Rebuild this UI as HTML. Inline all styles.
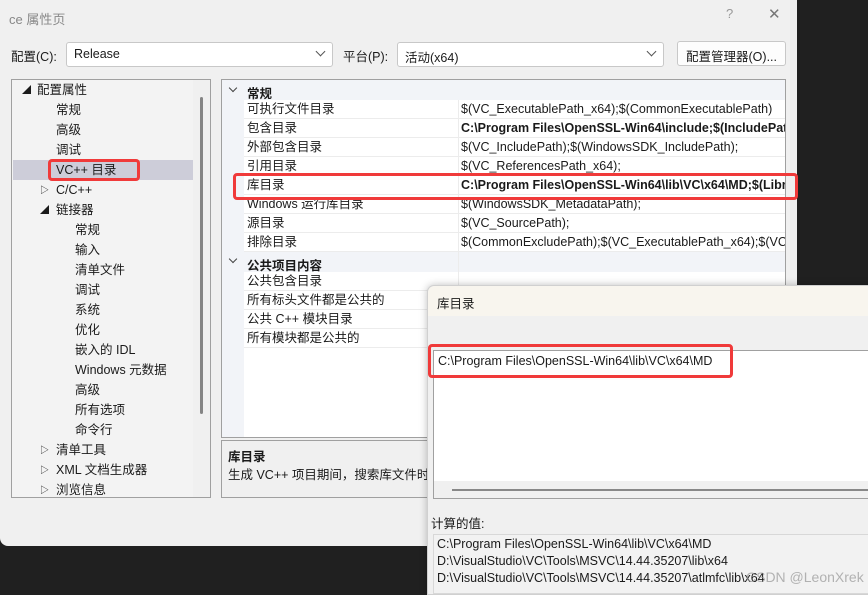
<!DOCTYPE html>
<html><head><meta charset="utf-8"><style>
*{margin:0;padding:0;box-sizing:border-box}
body{width:868px;height:589px;background:#202020;position:relative;overflow:hidden;font-family:"Liberation Sans","Noto Sans CJK SC",sans-serif;font-size:12px;color:#1a1a1a}
.a{position:absolute;white-space:nowrap}
#dlg{position:absolute;left:0;top:0;width:797px;height:546px;background:#f0f0f0;border-radius:0 0 8px 8px}
.combo{position:absolute;height:25px;background:#fff;border:1px solid #c8c8c8;border-radius:3px;padding:4px 7px;font-size:12.5px}
.chev{position:absolute;right:8px;top:5px;width:7px;height:7px;border-right:1px solid #555;border-bottom:1px solid #555;transform:rotate(45deg)}
.gchev{position:absolute;width:6px;height:6px;border-right:1.3px solid #444;border-bottom:1.3px solid #444;transform:rotate(45deg)}
.tree div{position:absolute;height:20px;line-height:20px;font-size:12.5px;white-space:nowrap}
.grid div.r{position:absolute;left:22px;width:542px;height:19px;line-height:19px;background:#fff;border-bottom:1px solid #ececec;font-size:12.5px;padding-left:3px;white-space:nowrap;overflow:hidden}
.r span{position:absolute;left:217px;white-space:nowrap}
.red{position:absolute;border:3px solid #f03a3a;border-radius:4px}
</style></head><body>
<div id="dlg">
<div class="a" style="left:9px;top:9px;font-size:13px;color:#888">ce 属性页</div>
<div class="a" style="left:726px;top:6px;color:#999;font-size:13px">?</div>
<div class="a" style="left:768px;top:5px;color:#777;font-size:15px">✕</div>
<div class="a" style="left:11px;top:46px;font-size:12.5px">配置(C):</div>
<div class="combo" style="left:66px;top:42px;width:267px">Release<div class="chev"></div></div>
<div class="a" style="left:343px;top:46px;font-size:12.5px">平台(P):</div>
<div class="combo" style="left:397px;top:42px;width:267px">活动(x64)<div class="chev"></div></div>
<div class="combo" style="left:677px;top:41px;width:109px;background:#fdfdfd;text-align:center;padding:4px 0">配置管理器(O)...</div>

<div class="tree" style="position:absolute;left:11px;top:79px;width:200px;height:419px;border:1px solid #a0a0a0;background:#f3f3f3;overflow:hidden">
<div style="left:1px;top:80px;width:180px;background:#cdcdd9"></div>
<div style="left:10px;top:0;font-size:9px">◢</div><div style="left:25px;top:0">配置属性</div>
<div style="left:44px;top:20px">常规</div><div style="left:44px;top:40px">高级</div><div style="left:44px;top:60px">调试</div>
<div style="left:44px;top:80px">VC++ 目录</div>
<div style="left:28px;top:100px;font-size:9px">▷</div><div style="left:44px;top:100px">C/C++</div>
<div style="left:28px;top:120px;font-size:9px">◢</div><div style="left:44px;top:120px">链接器</div>
<div style="left:63px;top:140px">常规</div><div style="left:63px;top:160px">输入</div><div style="left:63px;top:180px">清单文件</div><div style="left:63px;top:200px">调试</div><div style="left:63px;top:220px">系统</div><div style="left:63px;top:240px">优化</div><div style="left:63px;top:260px">嵌入的 IDL</div><div style="left:63px;top:280px">Windows 元数据</div><div style="left:63px;top:300px">高级</div><div style="left:63px;top:320px">所有选项</div><div style="left:63px;top:340px">命令行</div>
<div style="left:28px;top:360px;font-size:9px">▷</div><div style="left:44px;top:360px">清单工具</div>
<div style="left:28px;top:380px;font-size:9px">▷</div><div style="left:44px;top:380px">XML 文档生成器</div>
<div style="left:28px;top:400px;font-size:9px">▷</div><div style="left:44px;top:400px">浏览信息</div>
<div style="left:181px;top:0;width:18px;height:419px;background:#f0f0f0"></div>
<div style="left:188px;top:17px;width:3px;height:317px;background:#858585;border-radius:2px"></div>
</div>
<div class="red" style="left:48px;top:159px;width:92px;height:22px"></div>

<div class="grid" style="position:absolute;left:221px;top:79px;width:565px;height:359px;border:1px solid #a0a0a0;background:#f2f4f8;overflow:hidden">
<div class="gchev" style="left:8px;top:5px"></div><div class="a" style="left:25px;top:3px;font-weight:bold;font-size:12.5px">常规</div>
<div class="r" style="top:20px">可执行文件目录<span>$(VC_ExecutablePath_x64);$(CommonExecutablePath)</span></div>
<div class="r" style="top:39px">包含目录<span style="font-weight:bold">C:\Program Files\OpenSSL-Win64\include;$(IncludePath)</span></div>
<div class="r" style="top:58px">外部包含目录<span>$(VC_IncludePath);$(WindowsSDK_IncludePath);</span></div>
<div class="r" style="top:77px">引用目录<span>$(VC_ReferencesPath_x64);</span></div>
<div class="r" style="top:96px">库目录<span style="font-weight:bold">C:\Program Files\OpenSSL-Win64\lib\VC\x64\MD;$(LibraryPath)</span></div>
<div class="r" style="top:115px">Windows 运行库目录<span>$(WindowsSDK_MetadataPath);</span></div>
<div class="r" style="top:134px">源目录<span>$(VC_SourcePath);</span></div>
<div class="r" style="top:153px">排除目录<span>$(CommonExcludePath);$(VC_ExecutablePath_x64);$(VC_LibraryPath)</span></div>
<div class="gchev" style="left:8px;top:176px"></div><div class="a" style="left:25px;top:175px;font-weight:bold;font-size:12.5px">公共项目内容</div>
<div class="r" style="top:192px">公共包含目录</div>
<div class="r" style="top:211px">所有标头文件都是公共的</div>
<div class="r" style="top:230px">公共 C++ 模块目录</div>
<div class="r" style="top:249px">所有模块都是公共的</div>
<div style="position:absolute;left:22px;top:268px;width:542px;height:90px;background:#fff"></div>
<div style="position:absolute;left:236px;top:20px;width:1px;height:248px;background:#ececec"></div>
</div>
<div class="red" style="left:233px;top:173px;width:565px;height:27px"></div>

<div style="position:absolute;left:221px;top:440px;width:565px;height:58px;border:1px solid #a0a0a0;background:#f0f0f0;overflow:hidden">
<div class="a" style="left:6px;top:5px;font-weight:bold;font-size:12.5px">库目录</div>
<div class="a" style="left:6px;top:23px;font-size:12.5px">生成 VC++ 项目期间，搜索库文件时使用的路径</div>
</div>
</div>

<div style="position:absolute;left:427px;top:285px;width:445px;height:310px;background:#f0f0f0;border-radius:7px 0 0 0;border:1px solid #d0d0d0;box-shadow:0 0 8px rgba(0,0,0,.25)">
<div style="height:30px;background:#f8f5ee;border-radius:7px 0 0 0;padding:7px 9px;font-size:12.5px">库目录</div>
<div style="position:absolute;left:5px;top:64px;width:440px;height:149px;border:1px solid #a0a0a0;background:#fff">
<div class="a" style="left:4px;top:3px;font-size:12.5px">C:\Program Files\OpenSSL-Win64\lib\VC\x64\MD</div>
<div style="position:absolute;left:0;bottom:0;width:100%;height:17px;background:#f0f0f0"></div>
<div style="position:absolute;left:18px;bottom:7px;width:420px;height:2px;background:#888"></div>
</div>
<div class="a" style="left:3px;top:227px;font-size:12.5px">计算的值:</div>
<div style="position:absolute;left:5px;top:248px;width:440px;height:60px;border:1px solid #d8d8d8;background:#f2f2f2;font-size:12.5px;line-height:17px;padding:1px 3px;white-space:nowrap">
C:\Program Files\OpenSSL-Win64\lib\VC\x64\MD<br>D:\VisualStudio\VC\Tools\MSVC\14.44.35207\lib\x64<br>D:\VisualStudio\VC\Tools\MSVC\14.44.35207\atlmfc\lib\x64</div>
<div class="a" style="left:318px;top:283px;font-size:14px;color:rgba(150,150,150,.7)">CSDN @LeonXrek</div>
</div>
<div class="red" style="left:428px;top:344px;width:305px;height:34px"></div>
</body></html>
